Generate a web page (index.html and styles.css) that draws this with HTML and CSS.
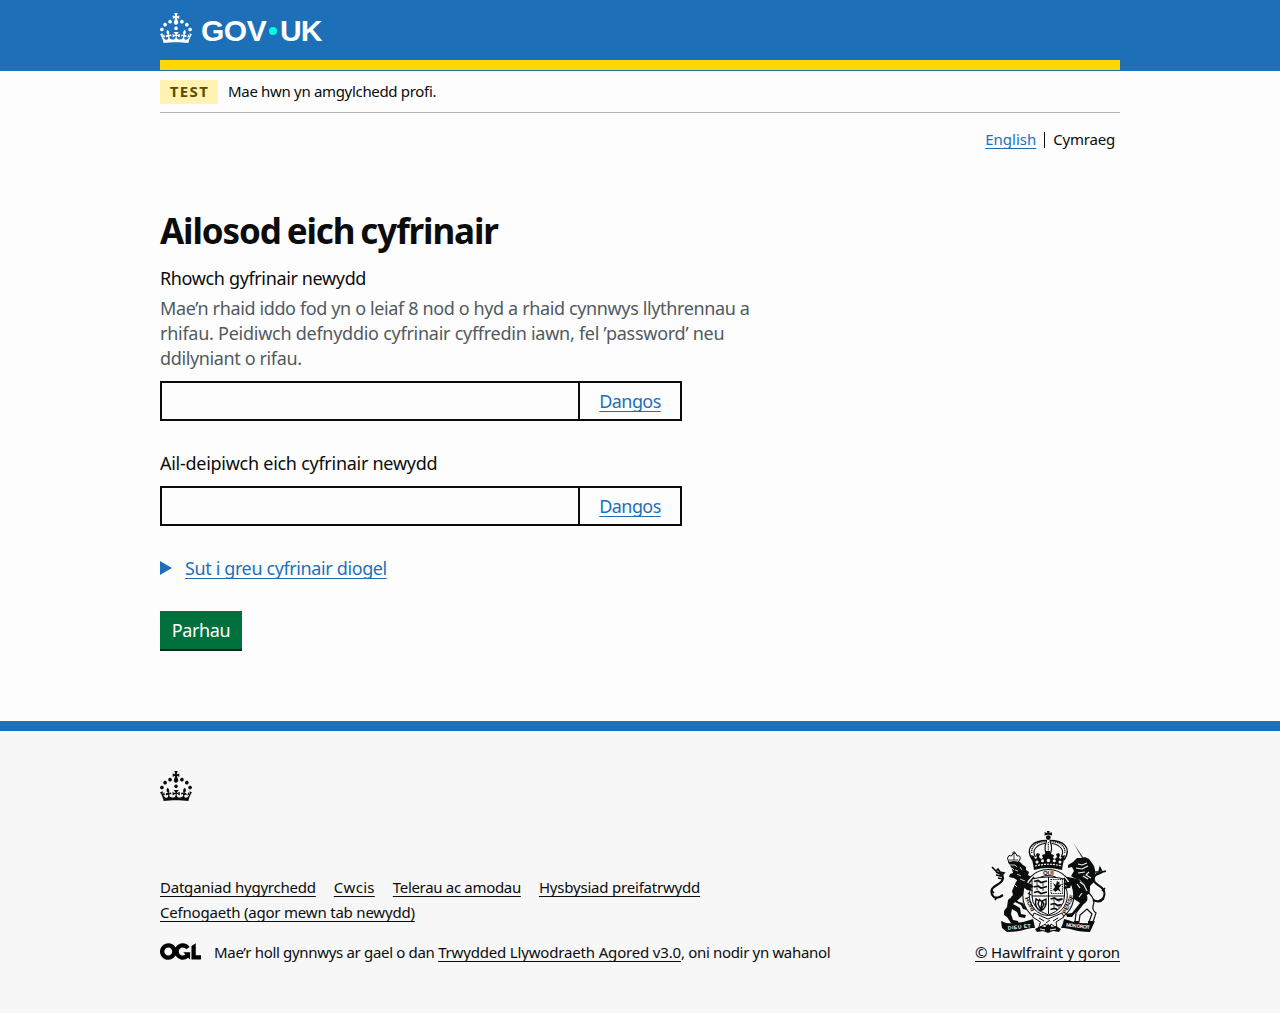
FILE: index.html
```html
<!DOCTYPE html>
<html lang="cy">
<head>
<meta charset="utf-8">
<title>Ailosod eich cyfrinair - GOV.UK</title>
<link rel="stylesheet" href="styles.css">
</head>
<body>
<svg class="sprite" aria-hidden="true">
  <symbol id="crown" viewBox="0 0 32 30"><path fill-rule="evenodd" d="M22.6 10.4c-1 .4-2-.1-2.4-1-.4-.9.1-2 1-2.4.9-.4 2 .1 2.4 1s-.1 2-1 2.4m-5.9 6.7c-.9.4-2-.1-2.4-1-.4-.9.1-2 1-2.4.9-.4 2 .1 2.4 1s-.1 2-1 2.4m10.8-3.7c-1 .4-2-.1-2.4-1-.4-.9.1-2 1-2.4.9-.4 2 .1 2.4 1s0 2-1 2.4m3.3 4.8c-1 .4-2-.1-2.4-1-.4-.9.1-2 1-2.4.9-.4 2 .1 2.4 1s-.1 2-1 2.4M17 4.7l2.3 1.2V2.5l-2.3.7-.2-.2.9-3h-3.4l.9 3-.2.2c-.1.1-2.3-.7-2.3-.7v3.4L15 4.7c.1.1.1.2.2.2l-1.3 4c-.1.2-.1.4-.1.6 0 1.1.8 2 1.9 2.2h.7c1-.2 1.9-1.1 1.9-2.1 0-.2 0-.4-.1-.6l-1.3-4c-.1-.2 0-.2.1-.3m-7.6 5.7c.9.4 2-.1 2.4-1 .4-.9-.1-2-1-2.4-.9-.4-2 .1-2.4 1s0 2 1 2.4m-5 3c.9.4 2-.1 2.4-1 .4-.9-.1-2-1-2.4-.9-.4-2 .1-2.4 1s.1 2 1 2.4m-3.2 4.8c.9.4 2-.1 2.4-1 .4-.9-.1-2-1-2.4-.9-.4-2 .1-2.4 1s0 2 1 2.4m14.8 11c4.4 0 8.6.3 12.3.8 1.1-4.5 2.4-7 3.7-8.8l-2.5-.9c.2 1.3.3 1.9 0 2.7-.4-.4-.8-1.1-1.1-2.3l-1.2 4c.7-.5 1.3-.8 2-.9-1.1 2.5-2.6 3.1-3.5 3-1.1-.2-1.7-1.2-1.5-2.1.3-1.2 1.5-1.5 2.1-.1 1.1-2.3-.8-3-2-2.3 1.9-1.9 2.1-3.5.6-5.6-2.1 1.6-2.1 3.2-1.2 5.5-1.2-1.4-3.2-.6-2.5 1.6.9-1.4 2.1-.5 1.9.8-.2 1.1-1.7 2.1-3.5 1.9-2.7-.2-2.9-2.1-2.9-3.6.7-.1 1.9.5 2.9 1.9l.4-4.3c-1.1 1.1-2.1 1.4-3.2 1.4.4-1.2 2.1-3 2.1-3h-5.4s1.7 1.9 2.1 3c-1.1 0-2.1-.2-3.2-1.4l.4 4.3c1-1.4 2.2-2 2.9-1.9-.1 1.5-.2 3.4-2.9 3.6-1.9.2-3.4-.8-3.5-1.9-.2-1.3 1-2.2 1.9-.8.7-2.3-1.2-3-2.5-1.6.9-2.2.9-3.9-1.2-5.5-1.5 2-1.3 3.7.6 5.6-1.2-.7-3.1 0-2 2.3.6-1.4 1.8-1.1 2.1.1.2.9-.3 1.9-1.5 2.1-.9.2-2.4-.5-3.5-3 .6 0 1.2.3 2 .9l-1.2-4c-.3 1.1-.7 1.9-1.1 2.3-.3-.8-.2-1.4 0-2.7l-2.9.9C1.3 23 2.6 25.5 3.7 30c3.7-.5 7.9-.8 12.3-.8"/></symbol>
</svg>

<header class="header">
  <div class="container header-inner">
    <svg class="crown" aria-hidden="true"><use href="#crown"/></svg>
    <span class="logo"><span class="gov">GOV</span><span class="dot"></span><span class="uk">UK</span></span>
  </div>
</header>

<div class="container">
  <div class="phase-banner">
    <strong class="tag">TEST</strong>
    <span class="phase-text">Mae hwn yn amgylchedd profi.</span>
  </div>
  <nav class="languages">
    <a class="link" href="#">English</a>
    <span class="current">Cymraeg</span>
  </nav>

  <main>
    <h1>Ailosod eich cyfrinair</h1>
    <form>
      <div class="group">
        <label class="label" for="p1">Rhowch gyfrinair newydd</label>
        <div class="hint">Mae’n rhaid iddo fod yn o leiaf 8 nod o hyd a rhaid cynnwys llythrennau a<br><span class="hint-wide">rhifau. Peidiwch defnyddio cyfrinair cyffredin iawn, fel ’password’ neu</span><br>ddilyniant o rifau.</div>
        <div class="password"><input id="p1" type="password"><button type="button">Dangos</button></div>
      </div>
      <div class="group second">
        <label class="label retype" for="p2">Ail-deipiwch eich cyfrinair newydd</label>
        <div class="password"><input id="p2" type="password"><button type="button">Dangos</button></div>
      </div>
      <div class="details"><svg width="12" height="14" viewBox="0 0 12 14" aria-hidden="true"><path d="M0 0L12 7L0 14Z" fill="#1d70b8"/></svg><a class="link" href="#">Sut i greu cyfrinair diogel</a></div>
      <button class="submit" type="button">Parhau</button>
    </form>
  </main>
</div>

<footer class="footer">
  <div class="container">
    <svg class="crown" aria-hidden="true"><use href="#crown"/></svg>
    <div class="footer-meta">
      <div class="footer-left">
        <div class="footer-links">
          <a class="accessibility" href="#">Datganiad hygyrchedd</a>
          <a class="cookies" href="#">Cwcis</a>
          <a class="terms" href="#">Telerau ac amodau</a>
          <a class="privacy" href="#">Hysbysiad preifatrwydd</a>
          <a class="support" href="#">Cefnogaeth (agor mewn tab newydd)</a>
        </div>
        <div class="licence">
          <svg width="41" height="17" viewBox="0 0 483.2 195.7" aria-hidden="true"><path d="M421.5 142.8V.1l-50.7 32.3v161.1h112.4v-50.7zm-122.3-9.6A47.12 47.12 0 0 1 221 97.8c0-26 21.1-47.1 47.1-47.1 16.7 0 31.4 8.7 39.7 21.8l42.7-27.2A97.63 97.63 0 0 0 268.1 0c-36.5 0-68.3 20.1-85.1 49.7A98 98 0 0 0 97.8 0C43.9 0 0 43.9 0 97.8s43.9 97.8 97.8 97.8c36.5 0 68.3-20.1 85.1-49.7a97.76 97.76 0 0 0 149.6 25.4l19.4 22.2h3v-87.8h-80l24.3 27.5zM97.8 145c-26 0-47.1-21.1-47.1-47.1s21.1-47.1 47.1-47.1 47.1 21.1 47.1 47.1S123.8 145 97.8 145"/></svg>
          <span class="licence-text">Mae’r holl gynnwys ar gael o dan <a href="#">Trwydded Llywodraeth Agored v3.0</a><span class="licence-end">, oni nodir yn wahanol</span></span>
        </div>
      </div>
      <div class="copyright">
        <svg class="arms" width="116" height="102" viewBox="0 0 116 102" fill="#0b0c0c" aria-hidden="true">
          <!-- royal crown -->
          <circle cx="58.3" cy="6.6" r="2.4"/><path d="M56.8 0h3l-.6 2 2.8-.8v3.2l-3-.7h-1.4l-3 .7V1.200l2.800.8z"/>
          <g fill="none" stroke="#0b0c0c">
            <path d="M42.500 29C34 16 44 9.500 57 9.500M74.100 29C82.600 16 72.600 9.500 59.600 9.500" stroke-width="1.400"/>
            <path d="M45.500 26C41 19 47 13.500 55 12.500M71.100 26C75.600 19 69.600 13.500 61.600 12.500" stroke-width="1.100"/>
            <path d="M41.800 22C41 14 48 10.500 55 11M74.800 22C75.600 14 68.600 10.500 61.600 11" stroke-width="1.200" stroke-dasharray="1.200 .7"/>
            <path d="M56.500 10C54 17 55 20 57 25M60.100 10C62.600 17 61.600 20 59.600 25" stroke-width="1.200"/>
            <path d="M58.300 11v13" stroke-width="1" stroke-dasharray="1.200 .6"/>
          </g>
          <path d="M41 24l3 1 1 3 2-1-1-3 1-2 3 1-1 3 2 2 2-1-1-3 3-1 1-3h4l1 3 3 1-1 3 2 1 2-2-1-3 3-1 1 2-1 3 2 1 1-3 3-1-2 9-1 6q-15-4-28 0l-1-6z"/>
          <g fill="#f7f7f7"><circle cx="47" cy="31" r="1.500"/><circle cx="52.500" cy="29.800" r="1.500"/><circle cx="58.400" cy="29.500" r="1.700"/><circle cx="64.300" cy="29.800" r="1.500"/><circle cx="70" cy="31" r="1.500"/></g>
          <path d="M45 35q13.500-3.500 27 0" fill="none" stroke="#f7f7f7" stroke-width="1.200" stroke-dasharray="2 1"/>
          <!-- lion -->
          <path d="M17.500 27q1-4 4-2 1-3 3-3t2.500 3q4-1 3 3l-2 4h-9z" fill="#f7f7f7" stroke="#0b0c0c" stroke-width="1"/>
          <path d="M22 22h4M24 20v9M19 29h9" stroke="#0b0c0c" stroke-width=".8" fill="none"/>
          <path d="M18 31l6-1 6 1 3 3 3 2 0 3 3 2-1 3 3 2-1 3 3 2 3 3 6 0 2 2-3 2 2 1-4 1-8-3-3 1-1 2 7 4-1 3-6-1-4-2-4 4-6 5 7 4 1 6 5 1-1 3-6-1-2-5-5-3-1 5 2 6 5 1 1 3-8-1-4-6-3-2 0-4 3-4 1-7 5-5-1-4 3-7 2-4-4-2-4-1 1-3 3-1-1-4z"/>
          <path d="M24 67l5 4 4 1 2 4 2 0 0 3-4-1-2-4-6-3z"/>
          <g fill="none" stroke="#0b0c0c"><path d="M13 64C5 70 0 65 2 58C4 54 13 53 13 47C13 43 10 42 6 41" stroke-width="2.200"/><path d="M2 36l4 4 2-2 2 3 4 1-3 3-5-1M1 59l3 3M7 66l-2 3M13 48l-5-1" stroke-width="1.700"/></g>
          <g fill="none" stroke="#f7f7f7" stroke-width=".8"><path d="M19 34h6l2 2M18 38l4-1 2 2M25 39l3 1M30 36l2 3M27 43l4 2M30 48l5 2M23 47l4 3M24 53l3 3M17 65l4 2M13 74l4 2"/></g>
          <!-- unicorn -->
          <path d="M83.500 12l9.500 17 1.500-.8z" opacity=".75"/>
          <path d="M92 27l3-1 4 2 3 4 2 3 1 4 0 5-2 3 1 4-4 4 0 6-4-2-1-5-5-5-6-2-3-2 3-5-2-4-4 1 0-3 5-3 4-4z"/>
          <path d="M72 47l6-1 10 2 7 6 5 8 0 8-5 6-9 5-4 5-5 0-1-3 6-1 4-5 4-5-6-4-7 0-7 3-4-1 1-3 7-3 5 0-4-4-8-1-2-3 7-2z"/>
          <g fill="#f7f7f7" stroke="#0b0c0c" stroke-width="1.200"><path d="M99 62q7 7 4 13-1 4 3 7l-3 9h-4l3-8-5-5-7 6-1 7h-4l1-9 7-9q6-4 3-9z"/></g>
          <path d="M98 90h5v3h-5zM84 90h5v3h-5z"/>
          <g fill="none" stroke="#0b0c0c"><path d="M103 69C114 74 117 62 112 57C108 53 102 52 104 46C106 41 111 44 112 40" stroke-width="2.200"/><path d="M116 40l-4 1-2-4-1 4-4 0M115 57l-3 3M114 68l-4 1" stroke-width="1.700"/></g>
          <g fill="none" stroke="#f7f7f7" stroke-width="1.100"><path d="M88 33l4 1 5-2M86 37l6 1 6-3M88 42l7-1M93 45l5 3M90 51l4 3 3 6M99 41l-3 3 5 3M87 53l3 4M92 62l-3 4"/></g>
          <!-- garter and shield -->
          <ellipse cx="58.300" cy="64.500" rx="25.500" ry="26" fill="#f7f7f7" stroke="#0b0c0c" stroke-width="1.100"/>
          <ellipse cx="58.300" cy="64.500" rx="19" ry="20" fill="none" stroke="#0b0c0c" stroke-width="1"/>
          <g class="garter" text-anchor="middle"><text x="58.300" y="44">QUI</text><text transform="translate(38 74) rotate(65)">HONI</text><text transform="translate(80 74) rotate(-65)">PENSE</text></g>
          <path d="M39 52l5-6M74 47l4 6M36 57l5 1M75 57l5-1M38 62l3 2" stroke="#0b0c0c" stroke-width="1.500"/>
          <path d="M42 48q16-4 32.500 0V65q0 13-16 19Q42 78 42 65z" fill="#f7f7f7" stroke="#0b0c0c" stroke-width="1"/>
          <path d="M58.500 46v37M42 65h32.500" stroke="#0b0c0c" stroke-width="1"/>
          <g fill="none" stroke="#0b0c0c" stroke-width="1.800"><path d="M44 50.500l4-1 3 2 6-1.500M44 56l4-1 3 2 6-1.500M44 61.500l4-1 3 2 6-1.500M60.500 68l4-1 3 2 5-1M60.500 73.500l4-1 3 2 4-1M60.500 78.500l4-1 3 1"/></g>
          <g fill="none" stroke="#0b0c0c" stroke-width=".8"><path d="M47 50v4M53 51v4M47 56v3M53 56v4M64 68v3M69 68v3M64 73v4M69 73v4"/></g>
          <path d="M61 48.500h11.500v14H61z" fill="none" stroke="#0b0c0c" stroke-width="1.200" stroke-dasharray="1 .8"/>
          <path d="M63 52l3 2 1-4 3 2-2 2 4-1-3 4 2 4-3-2-3 2-1-2-2 1 3-4z"/>
          <path d="M46 68q-2 8 4 12 7-2 6-12l-4 2 2 3-3 6-3-6 1-3zM49 68l3 3-1 6" fill="none" stroke="#0b0c0c" stroke-width="1.400"/>
          <path d="M33 50l8 3 3 3-4 1 3 3-6-1-5-4z"/><path d="M82 51l-6 0-3 2 4 2-4 2 7 0z"/>
          <!-- garter buckle and motto ribbon -->
          <path d="M44 82l14 6 14-6 2 4-8 5 1 6-6-4-2.500 7-3-7-7 4 2-6-8-5z" fill="#f7f7f7" stroke="#0b0c0c" stroke-width="1"/>
          <path d="M49 87l5 3M68 87l-5 3M56 92l4-3" stroke="#0b0c0c" stroke-width="1"/>
          <path d="M11 90l5 2q12 1 24-3l3-1 1 4 1 5-3 0-5 1q-9 3-20 3l-5-4z"/>
          <path d="M105 90l-5 2q-12 1-22-3l-4-1-1 4-2 5 3 0 6 1q9 3 20 3z"/>
          <g class="motto"><text transform="translate(18 98.800) rotate(-6)" textLength="23">DIEU ET</text><text transform="translate(76 95.500) rotate(6)" textLength="24">MON DROIT</text></g>
          <path d="M45 98l6-3 4 1 3-3 4 3 4-1 5 3-2 3-6-1-5 2-5-2-6 1z"/>
          <path d="M50 98l5 1M60 99l6-1" stroke="#f7f7f7" stroke-width="1"/>
        </svg>
        <a href="#">© Hawlfraint y goron</a>
      </div>
    </div>
  </div>
</footer>
</body>
</html>
```

FILE: styles.css
```css
* { box-sizing: border-box; }
body { margin: 0; background: #fdfdfd; color: #0b0c0c; font: 16px/25px "Noto Sans", sans-serif; }
.sprite { display: none; }
.container { width: 960px; margin: 0 auto; }
.crown { display: block; width: 32px; height: 30px; fill: currentColor; }

.header { background: #1d70b8; height: 71px; color: #fff; }
.header-inner { display: flex; height: 70px; padding-top: 13px; border-bottom: 10px solid #ffd800; }
.logo { display: flex; align-items: center; height: 36px; margin-left: 9px; font: bold 30px/36px "Liberation Sans", sans-serif; }
.gov { width: 68px; letter-spacing: -0.5px; }
.dot { width: 8px; height: 8px; border-radius: 50%; background: #00ffe0; }
.uk { margin-left: 3px; letter-spacing: -0.8px; }

.phase-banner { display: flex; align-items: center; height: 42px; border-bottom: 1px solid #b1b4b6; gap: 10px; font-size: 15px; }
.tag { display: flex; align-items: center; justify-content: center; width: 58px; height: 24px; padding-left: 1px; background: #fff2b3; color: #594d00; font-size: 15px; letter-spacing: 1.4px; }
.phase-text { letter-spacing: -0.32px; }

.languages { display: flex; justify-content: flex-end; padding: 19px 5px 0 0; font-size: 15px; line-height: 16px; }
.languages a { margin-top: -1px; }
.languages .current { margin-left: 8px; padding-left: 8px; border-left: 1px solid #0b0c0c; letter-spacing: -0.2px; line-height: 15px; height: 16px; }
.link { color: #1d70b8; text-decoration-thickness: 1px; text-underline-offset: 3px; text-decoration-skip-ink: none; }

main { padding-top: 63px; height: 573px; }
h1 { margin: 0; font-size: 35px; line-height: 40px; letter-spacing: -1.12px; word-spacing: -2px; }
form { padding-top: 15px; font-size: 18px; }
.label { display: block; height: 25px; letter-spacing: -0.36px; }
.retype { letter-spacing: -0.27px; }
.hint { margin-top: 5px; color: #505a5f; letter-spacing: -0.37px; }
.hint-wide { letter-spacing: -0.26px; }
.password { display: flex; width: 522px; margin-top: 10px; }
.password input { width: 420px; height: 40px; border: 2px solid #0b0c0c; background: transparent; }
.password button { width: 104px; height: 40px; margin-left: -2px; padding: 0; border: 2px solid #0b0c0c; background: transparent; color: #1d70b8; font: inherit; letter-spacing: -0.6px; text-decoration: underline 1px; text-underline-offset: 3px; text-decoration-skip-ink: none; }
.second { margin-top: 30px; }
.details { display: flex; align-items: center; margin-top: 30px; gap: 13px; letter-spacing: -0.38px; }
.details svg { margin-top: -2px; }
.submit { display: block; width: 82px; height: 40px; margin-top: 30px; padding: 0; border: 0; border-bottom: 2px solid #002d18; background: #00703c; color: #fff; font: inherit; letter-spacing: -0.4px; }

.footer { height: 292px; padding-top: 40px; border-top: 10px solid #1d70b8; background: #f7f7f7; font-size: 15px; }
.footer a { color: #0b0c0c; text-decoration-thickness: 1px; text-underline-offset: 3px; text-decoration-skip-ink: none; }
.footer-meta { display: flex; justify-content: space-between; margin-top: 30px; }
.footer-left { padding-top: 44px; }
.footer-links { display: flex; flex-wrap: wrap; column-gap: 18px; width: 640px; }
.accessibility { letter-spacing: -0.22px; }
.cookies { letter-spacing: 0.3px; }
.terms { letter-spacing: -0.32px; }
.privacy { letter-spacing: -0.2px; }
.support { letter-spacing: -0.2px; }
.licence { display: flex; align-items: center; gap: 13px; margin-top: 15px; }
.licence svg { margin-top: -2px; }
.licence-text { letter-spacing: -0.32px; }
.licence-text a { letter-spacing: -0.17px; }
.licence-end { letter-spacing: -0.33px; }
.copyright { display: flex; flex-direction: column; width: 145px; white-space: nowrap; letter-spacing: -0.13px; }
.arms { display: block; margin-left: 15px; margin-bottom: 7px; letter-spacing: 0; }
.garter { font: bold 6px "Liberation Sans", sans-serif; }
.motto { fill: #f7f7f7; font: bold 5px "Liberation Sans", sans-serif; }
```
